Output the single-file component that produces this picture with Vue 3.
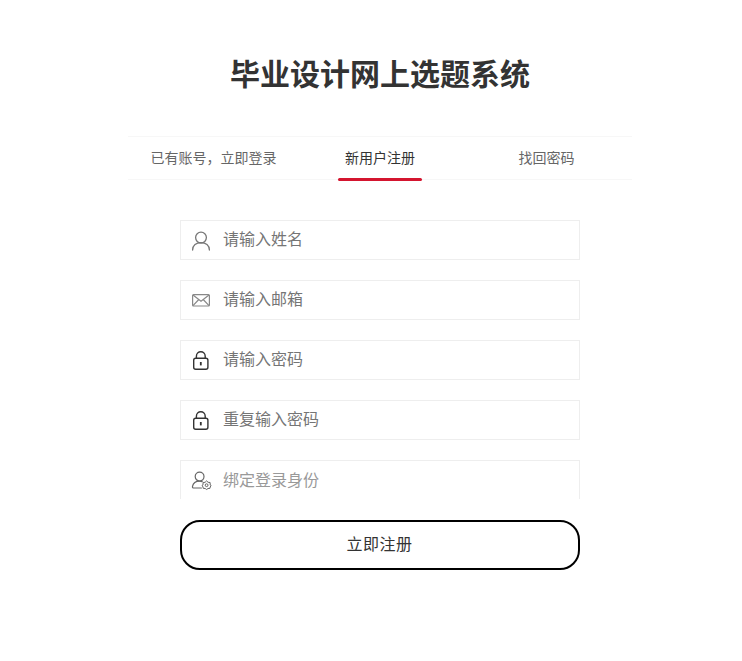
<template>
  <div class="page">
    <h1 class="title">毕业设计网上选题系统</h1>

    <div class="tabs">
      <div
        v-for="(tab, i) in tabs"
        :key="tab"
        class="tab"
        :class="{ active: i === 1 }"
      >
        <span class="tab-label">{{ tab }}</span>
      </div>
    </div>

    <div class="form">
      <div class="fields">
        <div v-for="field in fields" :key="field.text" class="field">
          <span class="field-icon">
            <svg v-if="field.icon === 'user'" width="22" height="22" viewBox="0 0 22 22" fill="none" stroke="#777" stroke-width="1.3">
              <circle cx="11" cy="8.6" r="5.4" />
              <path d="M2.6 21c0-4.6 3.6-7.4 8.4-7.4s8.4 2.8 8.4 7.4" stroke-linecap="round" />
            </svg>
            <svg v-else-if="field.icon === 'mail'" width="22" height="22" viewBox="0 0 22 22" fill="none" stroke="#888" stroke-width="1.2">
              <rect x="2.6" y="5.6" width="16.8" height="11.4" rx="1" />
              <path d="M3 6l8 6.2L19 6M3 16.6l5.8-6.1M19 16.6l-5.8-6.1" />
            </svg>
            <svg v-else-if="field.icon === 'lock'" width="22" height="22" viewBox="0 0 22 22" fill="none" stroke="#333" stroke-width="1.4">
              <rect x="3.7" y="9.2" width="14.2" height="11" rx="2" />
              <path d="M6.4 9.2V7.2a4.4 4.4 0 0 1 8.8 0v2" />
              <path d="M10.8 13v3.4" stroke-width="1.8" />
            </svg>
            <svg v-else width="22" height="22" viewBox="0 0 22 22" fill="none" stroke="#666" stroke-width="1.2">
              <circle cx="9.6" cy="7.6" r="4.4" />
              <path d="M11.4 19H3.8c-1 0-1.5-.6-1.3-1.6.6-3 3.4-5.2 7-5.2 1 0 2 .2 2.8.5" stroke-linecap="round" />
              <path d="M16.6 11.9l1.5 1.4 2 .2.1 2.4.9 .5-.9 1.6-.2 1.3-2 .2-1.4 1-1.4-1-2-.2-.2-1.3-.9-1.6.9-.5.1-2.4 2-.2z" stroke-width="1" />
              <circle cx="16.6" cy="16.2" r="1.4" stroke-width="1" />
            </svg>
          </span>
          <span class="field-text" :class="{ faint: field.faint }">{{ field.text }}</span>
        </div>
      </div>

      <button class="submit">立即注册</button>
    </div>
  </div>
</template>

<script setup>
const tabs = ['已有账号，立即登录', '新用户注册', '找回密码']

const fields = [
  { icon: 'user', text: '请输入姓名' },
  { icon: 'mail', text: '请输入邮箱' },
  { icon: 'lock', text: '请输入密码' },
  { icon: 'lock', text: '重复输入密码' },
  { icon: 'role', text: '绑定登录身份', faint: true }
]
</script>

<style scoped>
.page {
  width: 504px;
  margin-left: 128px;
  padding-top: 55px;
  font-family: "Liberation Sans", "Noto Sans CJK SC", sans-serif;
  color: #333;
}

.title {
  margin: 0 0 41px;
  font-size: 30px;
  line-height: 40px;
  font-weight: 700;
  text-align: center;
  color: #333;
}

.tabs {
  display: grid;
  grid-template-columns: 171px 1fr 171px;
  height: 44px;
  box-sizing: border-box;
  border-top: 1px solid #f7f7f7;
  border-bottom: 1px solid #f7f7f7;
}

.tab {
  display: flex;
  justify-content: center;
  font-size: 14px;
  color: #666;
}

.tab-label {
  position: relative;
  line-height: 42px;
  padding: 0 7px;
  height: 43px;
}

.tab.active {
  color: #333;
}

.tab.active .tab-label::after {
  content: '';
  position: absolute;
  left: 0;
  right: 0;
  bottom: -1px;
  height: 3px;
  background: #d4152f;
  border-radius: 2px;
}

.form {
  width: 400px;
  margin: 40px auto 0;
}

.fields {
  display: flex;
  flex-direction: column;
  gap: 20px;
  height: 279px;
  overflow: hidden;
}

.field {
  display: flex;
  flex: none;
  align-items: center;
  height: 40px;
  box-sizing: border-box;
  border: 1px solid #eee;
  padding-left: 9px;
}

.field-icon {
  display: flex;
  width: 22px;
  height: 22px;
  margin-right: 11px;
}

.field-text {
  padding-bottom: 4px;
  font-size: 16px;
  color: #757575;
}

.field-text.faint {
  padding-bottom: 2px;
  color: #999;
}

.submit {
  display: block;
  width: 400px;
  height: 50px;
  margin-top: 21px;
  padding: 0 1px 4px 0;
  background: #fff;
  border: 2px solid #000;
  border-radius: 20px;
  font-family: inherit;
  font-size: 16px;
  letter-spacing: 0.5px;
  color: #333;
}
</style>
